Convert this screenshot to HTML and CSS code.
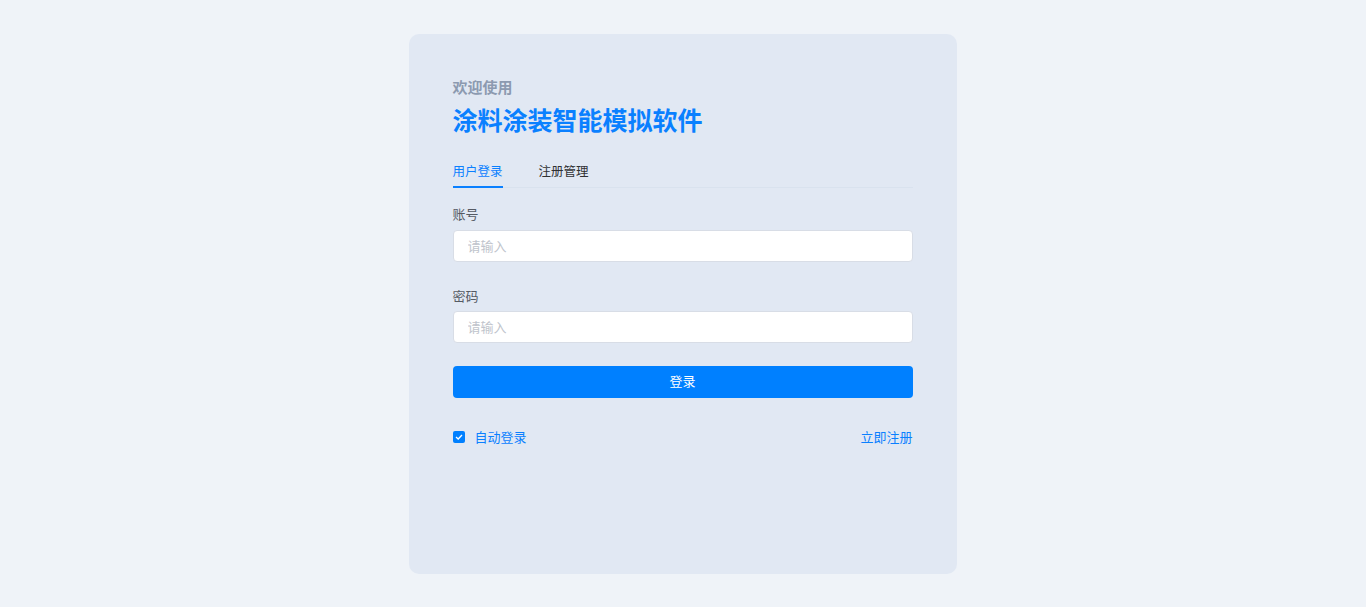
FILE: index.html
```html
<!DOCTYPE html>
<html lang="zh-CN">
<head>
<meta charset="utf-8">
<title>涂料涂装智能模拟软件</title>
<link rel="stylesheet" href="styles.css">
</head>
<body>
<div class="page">
  <div class="card">
    <div class="welcome">欢迎使用</div>
    <h1 class="title">涂料涂装智能模拟软件</h1>
    <div class="tabs">
      <div class="tab active">用户登录</div>
      <div class="tab">注册管理</div>
    </div>
    <form class="form" onsubmit="return false">
      <div class="field">
        <label class="label">账号</label>
        <input class="input" type="text" placeholder="请输入">
      </div>
      <div class="field">
        <label class="label">密码</label>
        <input class="input" type="password" placeholder="请输入">
      </div>
      <button class="btn" type="submit">登录</button>
      <div class="row">
        <label class="check">
          <span class="box"><svg width="8" height="6" viewBox="0 0 8 6"><path d="M1 3 L3.2 5 L7 1" fill="none" stroke="#fff" stroke-width="1.3"/></svg></span>
          <span class="check-text">自动登录</span>
        </label>
        <a class="link" href="#">立即注册</a>
      </div>
    </form>
  </div>
</div>
</body>
</html>
```
FILE: styles.css
```css
* { box-sizing: border-box; }
html, body {
  margin: 0;
  padding: 0;
  background: #eff3f8;
  font-family: "Noto Sans CJK SC", "Noto Sans", sans-serif;
}
.page {
  display: flex;
  justify-content: center;
  padding-top: 34px;
  height: 607px;
}
.card {
  width: 548px;
  height: 540px;
  margin-left: -1px;
  background: #e1e8f3;
  border-radius: 10px;
  padding: 43px 44px 0 44px;
  display: flex;
  flex-direction: column;
}
.welcome {
  font-size: 15px;
  line-height: 20px;
  font-weight: 700;
  color: #8c9ab0;
}
.title {
  margin: 6px 0 0 0;
  font-size: 25px;
  line-height: 32px;
  font-weight: 700;
  color: #0a80ff;
}
.tabs {
  margin-top: 26px;
  display: flex;
  gap: 36px;
  border-bottom: 1px solid #d9e2ee;
}
.tab {
  font-size: 12.5px;
  line-height: 20px;
  color: #303133;
  padding-bottom: 5px;
  border-bottom: 2px solid transparent;
  margin-bottom: -1px;
}
.tab.active {
  color: #0a80ff;
  border-bottom-color: #0a80ff;
}
.form {
  display: flex;
  flex-direction: column;
  margin-top: 16px;
}
.field {
  display: flex;
  flex-direction: column;
  margin-bottom: 23px;
}
.label {
  font-size: 13px;
  line-height: 20px;
  color: #555a63;
  margin-bottom: 6px;
}
.field + .field .label {
  padding-top: 1px;
  margin-bottom: 5px;
}
.input {
  height: 32px;
  width: 100%;
  border: 1px solid #d8dde6;
  border-radius: 4px;
  background: #fff;
  padding: 0 14px 2px 14px;
  font-family: inherit;
  font-size: 13px;
  color: #303133;
  outline: none;
}
.input::placeholder { color: #c0c4cc; }
.btn {
  height: 32px;
  border: none;
  border-radius: 4px;
  background: #0080ff;
  color: #fff;
  font-family: inherit;
  font-size: 13px;
  line-height: 30px;
  padding: 0 0 2px 0;
  cursor: pointer;
}
.row {
  margin-top: 29px;
  display: flex;
  justify-content: space-between;
  align-items: center;
  height: 20px;
}
.check {
  display: flex;
  align-items: center;
  gap: 10px;
  cursor: pointer;
}
.box {
  width: 12px;
  height: 12px;
  border-radius: 2px;
  background: #0080ff;
  display: flex;
  align-items: center;
  justify-content: center;
}
.check-text, .link {
  font-size: 13px;
  line-height: 20px;
  color: #0a80ff;
  text-decoration: none;
}
```
